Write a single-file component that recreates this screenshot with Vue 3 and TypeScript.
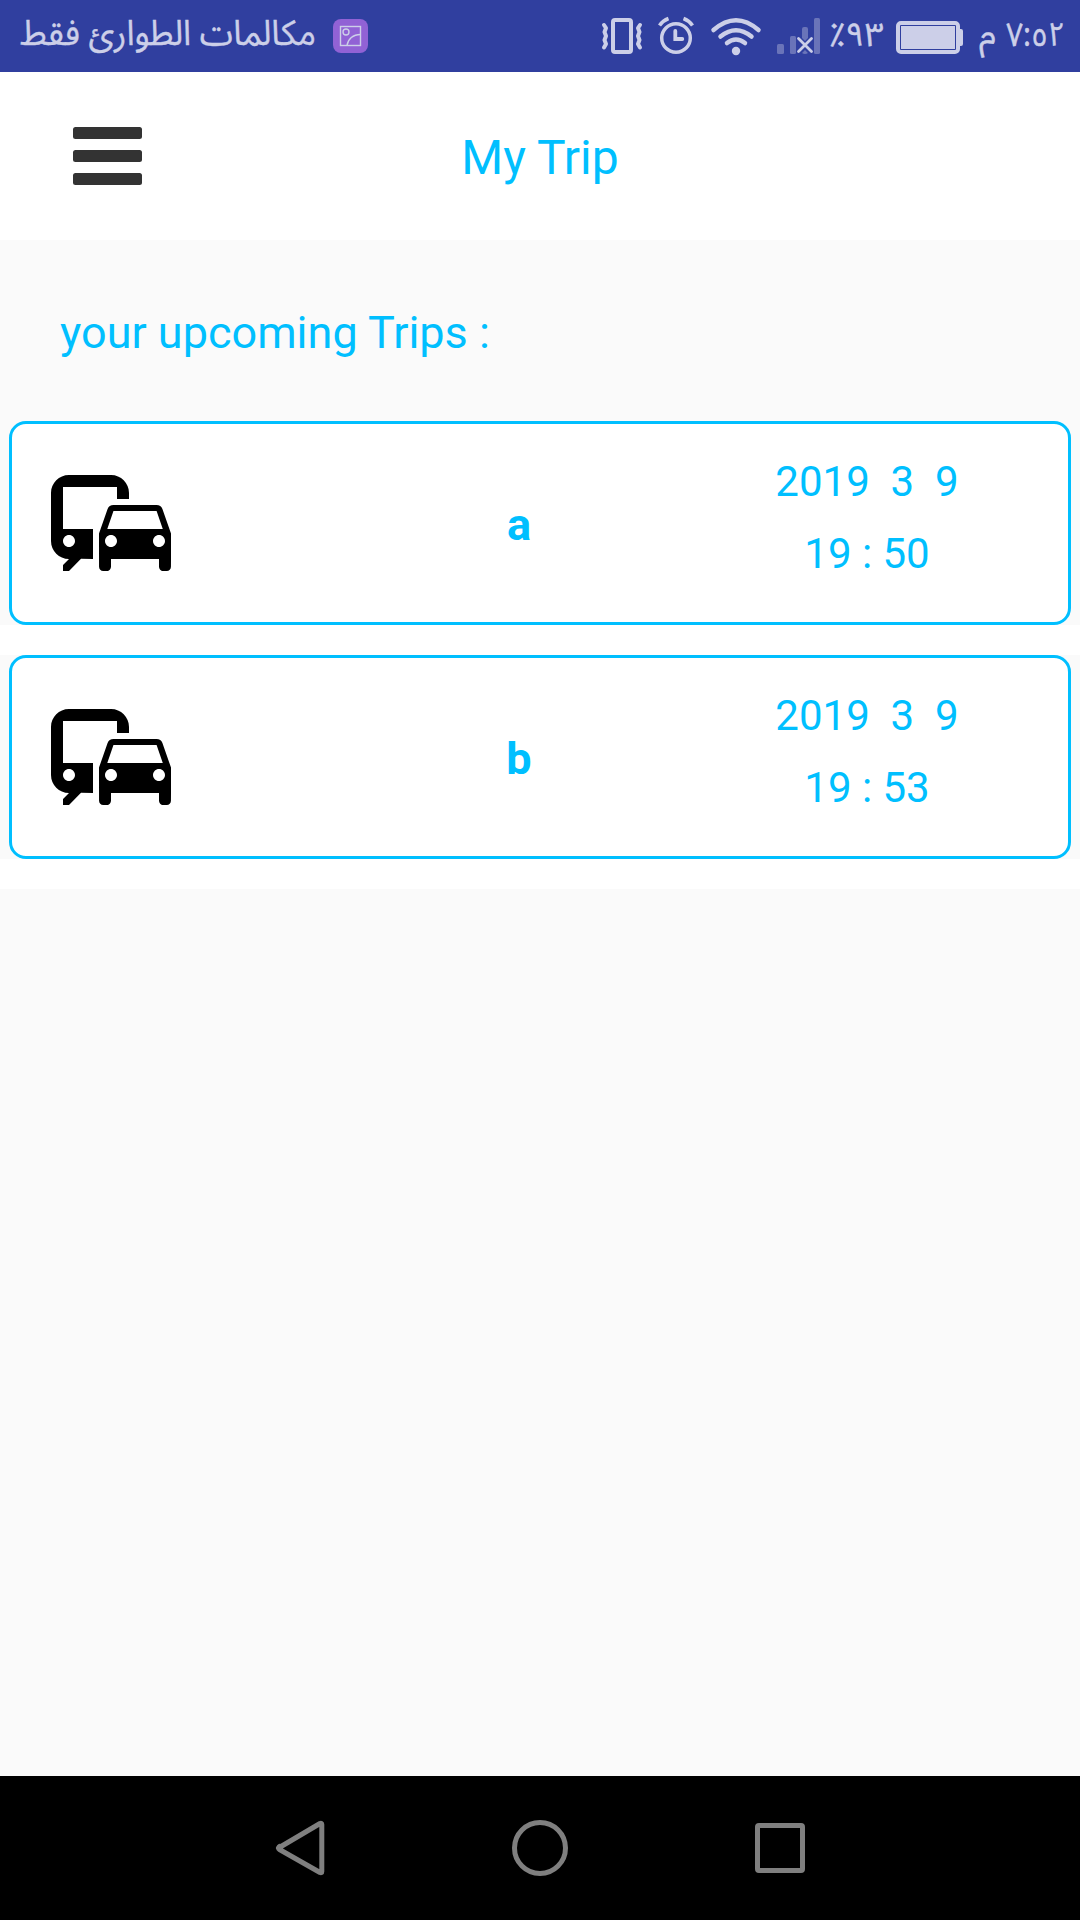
<script setup lang="ts">
interface Trip {
  name: string
  date: string
  time: string
}

const trips: Trip[] = [
  { name: 'a', date: '2019  3  9', time: '19 : 50' },
  { name: 'b', date: '2019  3  9', time: '19 : 53' },
]
</script>

<template>
  <div class="screen">
    <header class="status">
      <svg class="carrier" width="300" height="72" viewBox="0 0 300 72">
        <text x="0" y="45" font-size="35" textLength="296" lengthAdjust="spacingAndGlyphs">مكالمات الطوارئ فقط</text>
      </svg>
      <svg class="gallery" width="35" height="34" viewBox="0 0 35 34">
        <rect width="35" height="34" rx="8" fill="#9162d5" />
        <g fill="none" stroke="#cccfe8" stroke-width="1.4">
          <rect x="7.5" y="7.5" width="20" height="19" />
          <circle cx="13" cy="13" r="3" />
          <path d="M14 26.5C15 20 20 15.5 27.5 15.5" />
        </g>
      </svg>
      <svg class="indicators" width="230" height="72" viewBox="600 0 230 72" fill="none" stroke="#cccfe8">
        <rect x="613" y="20" width="18" height="32" rx="2" stroke-width="4" />
        <path
          d="M604 25l2 3-1.500 4 1.500 4-1.500 4 1.500 4-2 3.500M640 25l-2 3 1.500 4-1.500 4 1.500 4-1.500 4 2 3.500"
          stroke-width="4" stroke-linecap="round" stroke-linejoin="round" />
        <circle cx="676" cy="38" r="14.300" stroke-width="3.500" />
        <path d="M675.300 31v8h7" stroke-width="3.800" stroke-linecap="round" />
        <path d="M659.500 25.500q3.500-5 9-7M692.500 25.500q-3.500-5-9-7" stroke-width="3.600" />
        <g stroke-width="4.500" stroke-linecap="round">
          <path d="M713.500 30q22.500-19.500 45 0M720.500 36.500q15.500-12.500 31 0M727 43q9-7 18 0" />
        </g>
        <circle cx="736" cy="51" r="4.200" fill="#cccfe8" stroke="none" />
        <g fill="#6a74b9" stroke="none">
          <rect x="777" y="44" width="7" height="10" rx="1.500" />
          <rect x="790" y="36" width="6" height="18" rx="1.500" />
          <path d="M802 29q0-2 2-2h2q2 0 2 2v9l-3 3-3-3zM802 53l3-3 3 3q-3 2-6 0z" />
          <rect x="814" y="18" width="6" height="36" rx="1.500" />
        </g>
        <path d="M798.500 38.500l13 13M811.500 38.500l-13 13" stroke-width="2.800" stroke-linecap="round" />
      </svg>
      <svg class="percent" width="60" height="72" viewBox="0 0 60 72">
        <text x="-1" y="46" font-size="33" textLength="55" lengthAdjust="spacingAndGlyphs">٪٩٣</text>
      </svg>
      <svg class="battery" width="67" height="33" viewBox="0 0 67 33">
        <rect x="2" y="2" width="60" height="29" rx="3" fill="none" stroke="#cccfe8" stroke-width="4" />
        <rect x="5" y="5" width="54" height="23" fill="#cccfe8" />
        <path d="M63 8h2q2 0 2 2v13q0 2-2 2h-2z" fill="#cccfe8" />
      </svg>
      <svg class="clock" width="96" height="72" viewBox="0 0 96 72">
        <text x="1" y="45" font-size="33" textLength="17" lengthAdjust="spacingAndGlyphs">م</text>
        <text x="28" y="46" font-size="33" textLength="59" lengthAdjust="spacingAndGlyphs">٧:٥٢</text>
      </svg>
    </header>

    <div class="toolbar">
      <button class="menu" aria-label="Menu"><i /><i /><i /></button>
      <h1>My Trip</h1>
    </div>

    <h2>your upcoming Trips :</h2>

    <main>
      <section v-for="trip in trips" :key="trip.name" class="row">
        <article class="card">
          <svg class="commute" width="144" height="144" viewBox="0 0 24 24">
            <path
              d="M12 4H5C3.340 4 2 5.340 2 7v8c0 1.660 1.340 3 3 3l-1 1v1h1l2-2.030L9 18v-5H4V5.980L13 6v2h2V7c0-1.660-1.340-3-3-3zM5 14c.550 0 1 .450 1 1s-.450 1-1 1-1-.450-1-1 .450-1 1-1zm15.570-4.340c-.140-.400-.520-.660-.970-.660h-7.190c-.460 0-.830.260-.980.660L10 13.770l.010 5.510c0 .380.310.720.690.720h.620c.380 0 .680-.380.680-.760V18h8v1.240c0 .380.310.760.690.760h.610c.380 0 .690-.340.690-.720l.010-1.370v-4.140l-1.430-4.110zm-8.160.340h7.190l1.030 3h-9.250l1.030-3zM12 16c-.550 0-1-.450-1-1s.450-1 1-1 1 .450 1 1-.450 1-1 1zm8 0c-.550 0-1-.450-1-1s.450-1 1-1 1 .450 1 1-.450 1-1 1z" />
          </svg>
          <strong>{{ trip.name }}</strong>
          <div class="when">
            <span>{{ trip.date }}</span>
            <span>{{ trip.time }}</span>
          </div>
        </article>
      </section>
    </main>

    <nav>
      <svg width="1080" height="144" viewBox="0 0 1080 144" fill="none" stroke="#7f7f7f" stroke-width="5" stroke-linejoin="round">
        <path d="M278.500 72L320 47.500q1.800-.800 1.800 1v47q0 1.800-1.800 1L279.500 73.500q-2-1.500 0-3z" />
        <circle cx="540" cy="72" r="25.500" />
        <rect x="757.500" y="49.500" width="45" height="45" rx="1.500" />
      </svg>
    </nav>
  </div>
</template>

<style>
body {
  margin: 0;
}
</style>

<style scoped>
.screen {
  width: 1080px;
  height: 1920px;
  display: flex;
  flex-direction: column;
  overflow: hidden;
  background: #fafafa;
  color: #00bfff;
  font-family: Roboto, sans-serif;
}
.status {
  height: 72px;
  flex: none;
  display: flex;
  align-items: flex-start;
  background: #303f9f;
}
.status svg {
  flex: none;
  display: block;
  overflow: visible;
}
.status text {
  fill: #cccfe8;
  stroke: #cccfe8;
  stroke-width: 0.4px;
  font-family: 'Noto Sans Arabic', 'Noto Sans', 'DejaVu Sans', sans-serif;
}
.carrier {
  margin-left: 20px;
}
.status .gallery {
  margin: 19px 0 0 13px;
}
.status .indicators {
  margin-left: 232px;
}
.status .battery {
  margin: 21px 0 0 6px;
}
.clock {
  margin-left: 15px;
}
.toolbar {
  height: 168px;
  flex: none;
  display: grid;
  grid-template-columns: 1fr auto 1fr;
  align-items: start;
  background: #fff;
}
.menu {
  display: flex;
  flex-direction: column;
  gap: 11.4px;
  width: 69px;
  margin: 55.300px 0 0 73.400px;
  padding: 0;
  border: 0;
  background: none;
}
.menu i {
  height: 11.600px;
  border-radius: 2.500px;
  background: #333;
}
h1 {
  margin: 58px 0 0;
  font-size: 48px;
  line-height: 56px;
  font-weight: 400;
}
h2 {
  flex: none;
  height: 115px;
  margin: 0;
  padding: 66px 60px 0;
  font-size: 45px;
  line-height: 54px;
  font-weight: 400;
}
.row {
  padding: 0 9px;
  border-bottom: 30px solid #fff;
}
.card {
  box-sizing: border-box;
  height: 204px;
  display: flex;
  border: 3px solid #00bfff;
  border-radius: 17px;
  background: #fff;
}
.commute {
  flex: none;
  margin: 27px 0 0 27px;
}
strong {
  width: 440px;
  flex: none;
  margin: 74px 0 0 116px;
  text-align: center;
  font-size: 45px;
  line-height: 54px;
  font-weight: 700;
}
.when {
  width: 360px;
  margin: 22px 0 0 -52px;
  display: flex;
  flex-direction: column;
  text-align: center;
  white-space: pre;
  font-size: 42px;
  line-height: 72px;
}
nav {
  height: 144px;
  flex: none;
  margin-top: auto;
  background: #000;
}
nav svg {
  display: block;
}
</style>
